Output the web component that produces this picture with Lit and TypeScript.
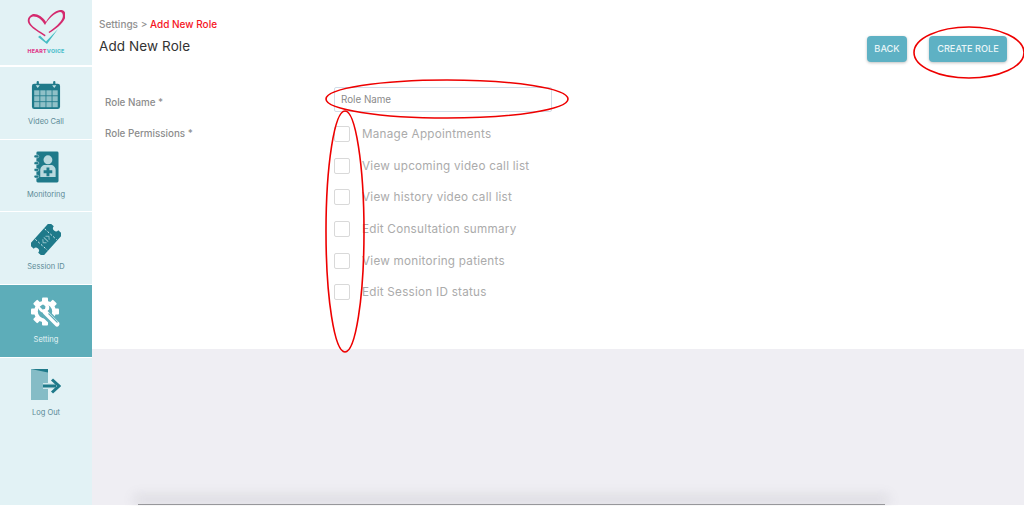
import { LitElement, html, css, svg } from "lit";
import { customElement } from "lit/decorators.js";

const calendar = html`<svg width="30" height="30" viewBox="0 0 32 32"><rect x="1" y="4" width="30" height="27" rx="2.500" fill="#1f7a8a"/><rect x="6" y="1" width="2.400" height="7" rx="1.200" fill="#1f7a8a"/><rect x="23.600" y="1" width="2.400" height="7" rx="1.200" fill="#1f7a8a"/><path d="M5 5.500l2.200 3 2.200-3zM22.600 5.500l2.200 3 2.200-3z" fill="#bfe0e4"/>
${[0,1,2,3].flatMap(c=>[0,1,2].map(r=>svg`<rect x="${3.400+c*6.500}" y="${11+r*6.300}" width="5.600" height="5.400" fill="#8fc0c7"/>`))}</svg>`;
const book = html`<svg width="25" height="32" viewBox="0 0 26 33"><rect x="2.500" y="0.500" width="23" height="32" rx="1.500" fill="#1f7a8a"/>${[4,11,18,25].map(y=>svg`<rect x="0" y="${y}" width="5" height="3" rx="1.500" fill="#1f7a8a" stroke="#e2f2f5" stroke-width=".5"/>`)}<circle cx="14.500" cy="9" r="4.600" fill="#b9d9de"/><path d="M6.500 27v-7c0-3.500 2.500-5.500 5-5.500h6c2.500 0 5 2 5 5.500v7z" fill="#b9d9de"/><path d="M13 17h3v3h3v3h-3v3h-3v-3h-3v-3h3z" fill="#1f7a8a"/></svg>`;
const ticket = html`<svg width="30" height="31" viewBox="0 0 30 31"><g transform="rotate(-48 15 15.500)">
<path d="M0 6.500h30v6a3 3 0 0 0 0 6v6H0v-6a3 3 0 0 0 0-6z" fill="#1f7a8a"/>
<path d="M8 7.500v16M22 7.500v16" stroke="#e2f2f5" stroke-width=".9" stroke-dasharray="2 1.800"/>
<path d="M13 13l-2.300 2.500 2.300 2.500M17 13l2.300 2.500L17 18M15 12.500v6" fill="none" stroke="#8fc0c7" stroke-width="1"/></g></svg>`;
const gear = html`<svg width="31" height="31" viewBox="0 0 31 31">
<g fill="#fff">${[0,45,90,135,180,225,270,315].map(a=>svg`<rect x="11" y="0.500" width="6" height="6" rx="1" transform="rotate(${a} 14 14.500)"/>`)}</g>
<circle cx="14" cy="14.500" r="9" fill="none" stroke="#fff" stroke-width="3.600"/>
<path d="M14 16l12 12" stroke="#5dadb9" stroke-width="9"/>
<path d="M7.500 8.500l4 4 2.500-.5.500-2.500-4-4c4.500-1.700 9 2.500 7.500 7l-3 3c-4 1.300-9-2.500-7.500-7z" fill="#fff"/>
<path d="M14 15L26 27" stroke="#fff" stroke-width="5" stroke-linecap="round"/>
<path d="M17.500 16.500L26.500 25.500" stroke="#5dadb9" stroke-width="1.100"/></svg>`;
const door = html`<svg width="30" height="32" viewBox="0 0 30 32"><path d="M0 0h17v31H0z" fill="#85bcc6"/><path d="M0 0h17v3.500z" fill="#1f7a8a"/><path d="M12 17h13" stroke="#cfe6ea" stroke-width="6"/><path d="M12 17h13" stroke="#1f7a8a" stroke-width="3"/><path d="M21 10.500l7 6.500-7 6.500" fill="none" stroke="#1f7a8a" stroke-width="3"/></svg>`;

const NAV = [
  { label: "Video Call", icon: calendar },
  { label: "Monitoring", icon: book },
  { label: "Session ID", icon: ticket },
  { label: "Setting", icon: gear, active: true },
  { label: "Log Out", icon: door },
];
const PERMS = [
  "Manage Appointments",
  "View upcoming video call list",
  "View history video call list",
  "Edit Consultation summary",
  "View monitoring patients",
  "Edit Session ID status",
];

@customElement("app-root")
export class AppRoot extends LitElement {
  static styles = css`
    :host { display: block; width: 1024px; height: 506px; position: relative; overflow: hidden; font-family: Inter, "Liberation Sans", sans-serif; background: #fff; }
    .shell { display: flex; height: 505px; background: #efeef3; }
    .side { width: 92px; flex: none; background: #e2f2f5; display: flex; flex-direction: column; }
    .logo { height: 55px; display: flex; flex-direction: column; align-items: center; padding-top: 10px; border-bottom: 2px solid #fff; }
    .logo-text { font-size: 5.300px; font-weight: 800; letter-spacing: .2px; margin-top: 1.500px; color: #e0408e; line-height: 7px; }
    .logo-text b { color: #4fc0cc; font-weight: 800; }
    .item { height: 72.700px; flex: none; border-bottom: 1.500px solid #fff; display: flex; flex-direction: column; align-items: center; color: #5b8a96; font-size: 7.500px; padding-top: 11px; box-sizing: border-box; }
    .item .ic { height: 33px; display: flex; align-items: center; justify-content: center; margin-bottom: 6px; }
    .item.active { background: #5dadb9; color: #e6f4f6; }
    .item.last { border-bottom: none; }
    .main { flex: 1; display: flex; flex-direction: column; }
    .panel { height: 349px; background: #fff; box-sizing: border-box; padding: 17px 17px 0 7px; }
    .head { display: flex; justify-content: space-between; }
    .crumb { font-size: 10px; color: #909090; line-height: 14px; font-weight: 500; }
    .crumb span { color: #f5141e; }
    h1 { margin: 7px 0 0; font-size: 13.500px; font-weight: 400; color: #333; line-height: 17px; letter-spacing: .1px; }
    .actions { display: flex; gap: 22px; padding-top: 19px; }
    button { height: 26px; border: none; border-radius: 4px; background: #5eb1c4; color: #eaf6f8; font: 500 9.200px/24px Inter, "Liberation Sans", sans-serif; box-shadow: 0 1px 3px rgba(0,0,0,.25); padding: 0 0 1px; }
    .back { width: 40px; }
    .create { width: 78px; }
    .form { display: grid; grid-template-columns: 229px 218px; margin: 0 0 0 6px; padding-top: 25px; row-gap: 14px; }
    .lab { font-size: 9.800px; color: #8c8c8c; font-weight: 500; }
    .lab.n { line-height: 32px; height: 25px; }
    .lab.p { line-height: 16px; }
    .field { height: 25px; box-sizing: border-box; border: 1px solid #d2dde9; border-radius: 2px; padding: 0 6px; font-size: 9.800px; line-height: 24px; color: #8a8a8a; }
    .perms { display: flex; flex-direction: column; gap: 15.700px; width: 300px; }
    .perm { display: flex; align-items: center; gap: 12px; height: 16px; font-size: 11.700px; color: #ababab; white-space: nowrap; letter-spacing: .25px; }
    .box { width: 16px; height: 16px; box-sizing: border-box; border: 1px solid #d9d9d9; border-radius: 2px; flex: none; }
    .bar { position: absolute; left: 138px; width: 747px; bottom: 1px; height: 1.500px; background: #97979b; box-shadow: 0 -5px 12px 4px rgba(120,120,130,.16); }
    .marks { position: absolute; inset: 0; pointer-events: none; }
    .marks ellipse { fill: none; stroke: #ee0000; stroke-width: 1.600; }
  `;

  render() {
    return html`
      <div class="shell">
        <nav class="side">
          <div class="logo">
            <svg width="38" height="36" viewBox="0 0 38 36">
              <path d="M19 12C15 6 9 3 5 4.500 0 7-.5 12 3 15.500c3 3.500 9 7 15 11l.5-1.400C12.500 21 6 17.500 3.500 13.500 1.500 10 3 7 6 6.500c4-.5 9 3 12 8.500 3-6 10-12.500 15-13 2.500 0 3.500 3 2.500 6-1.500 4.500-8 10-14 14l.8 1c7-4 14-10 16-15.500C39.500 3 37 -.5 33 0c-5 .5-11 6-14 12z" fill="#d42a6e"/>
              <path d="M11 27l2-1.500 6 6L31 19 20 34z" fill="#46bcc4"/>
            </svg>
            <div class="logo-text">HEART<b>VOICE</b></div>
          </div>
          ${NAV.map((n, i) => html`
            <div class="item ${n.active ? "active" : ""} ${i === NAV.length - 1 ? "last" : ""}">
              <div class="ic">${n.icon}</div>
              <div>${n.label}</div>
            </div>`)}
        </nav>
        <main class="main">
          <section class="panel">
            <div class="head">
              <div>
                <div class="crumb">Settings &gt; <span>Add New Role</span></div>
                <h1>Add New Role</h1>
              </div>
              <div class="actions">
                <button class="back">BACK</button>
                <button class="create">CREATE ROLE</button>
              </div>
            </div>
            <div class="form">
              <div class="lab n">Role Name *</div>
              <div class="field">Role Name</div>
              <div class="lab p">Role Permissions *</div>
              <div class="perms">
                ${PERMS.map(p => html`<div class="perm"><div class="box"></div><div>${p}</div></div>`)}
              </div>
            </div>
          </section>
        </main>
      </div>
      <div class="bar"></div>
      <svg class="marks" width="1024" height="506" viewBox="0 0 1024 506">
        <ellipse cx="447" cy="99" rx="121" ry="19"/>
        <ellipse cx="345" cy="231.500" rx="19" ry="120.500"/>
        <ellipse cx="969" cy="52.500" rx="55" ry="25.500"/>
      </svg>
    `;
  }
}
